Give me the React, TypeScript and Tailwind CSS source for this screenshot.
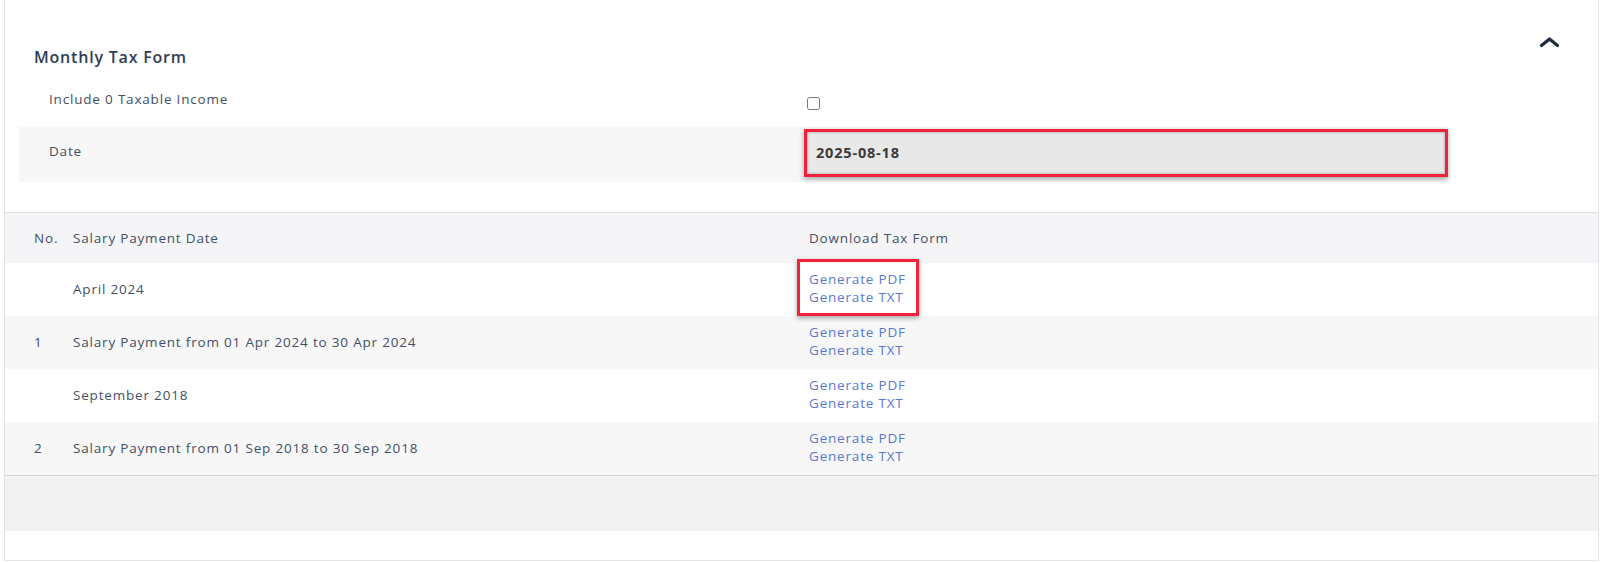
const rows = [
  { no: "", label: "April 2024", highlight: true },
  { no: "1", label: "Salary Payment from 01 Apr 2024 to 30 Apr 2024" },
  { no: "", label: "September 2018" },
  { no: "2", label: "Salary Payment from 01 Sep 2018 to 30 Sep 2018" },
];

export default function App() {
  return (
    <div className="min-h-[562px] bg-white pl-1 pr-[1px] font-['Open_Sans',sans-serif] text-[13.5px] tracking-[0.06em] text-[#445066]">
      <div className="relative border-x border-b border-[#e2e4e8] bg-white">
        {/* collapse toggle */}
        <button className="absolute left-[1534px] top-[36px] text-[#1f2a3d]">
          <svg width="21" height="12" viewBox="0 0 21 12" fill="none" stroke="currentColor" strokeWidth={3.2} strokeLinecap="round" strokeLinejoin="round">
            <polyline points="2.5,9.5 10.5,3 18.5,9.5" />
          </svg>
        </button>

        <h2 className="pl-[29px] pt-[47px] text-[16px] font-semibold leading-[20px] tracking-[0.05em] text-[#2f3e52]">
          Monthly Tax Form
        </h2>

        {/* form fields */}
        <div className="ml-[14px] mt-[5px] w-[1429px]">
          <div className="flex h-[55px]">
            <div className="w-[785px] pl-[30px] pt-[18px] leading-[18px]">Include 0 Taxable Income</div>
            <div className="pl-[3px] pt-[25px]">
              <input type="checkbox" className="block h-[13px] w-[13px]" />
            </div>
          </div>
          <div className="flex h-[55px] bg-[#f7f7f7]">
            <div className="w-[785px] pl-[30px] pt-[15px] leading-[18px]">Date</div>
            <div className="flex-1 pt-[2px]">
              <div className="flex h-[48px] items-center border-[3px] border-[#f4213b] bg-[#e8e8e8] pl-[9px] text-[14.5px] font-bold text-[#3a3a3a] shadow-[inset_0_0_3px_rgba(0,0,0,0.35),0_2px_5px_rgba(0,0,0,0.35)]">
                2025-08-18
              </div>
            </div>
          </div>
        </div>

        {/* table */}
        <div className="mt-[30px] border-t border-[#dcdee2]">
          <div className="flex h-[50px] items-center bg-[#f5f5f7]">
            <div className="w-[68px] pl-[29px]">No.</div>
            <div className="w-[736px]">Salary Payment Date</div>
            <div>Download Tax Form</div>
          </div>
          {rows.map((r, i) => (
            <div
              key={i}
              className={`flex h-[53px] items-center ${i % 2 === 1 ? "bg-[#f7f7f7]" : "bg-white"}`}
            >
              <div className="w-[68px] pl-[29px]">{r.no}</div>
              <div className="w-[736px]">{r.label}</div>
              <div className="relative flex flex-col pb-[4px] leading-[18px] text-[#5a78d3]">
                <a href="#">Generate PDF</a>
                <a href="#">Generate TXT</a>
                {r.highlight && (
                  <div className="pointer-events-none absolute -left-[12px] -top-[11px] h-[57px] w-[122px] border-[3px] border-[#f4213b] shadow-[0_2px_5px_rgba(0,0,0,0.35)]" />
                )}
              </div>
            </div>
          ))}
          <div className="h-[56px] border-t border-[#d6d6d6] bg-[#f2f2f2]" />
          <div className="h-[29px]" />
        </div>
      </div>
    </div>
  );
}
